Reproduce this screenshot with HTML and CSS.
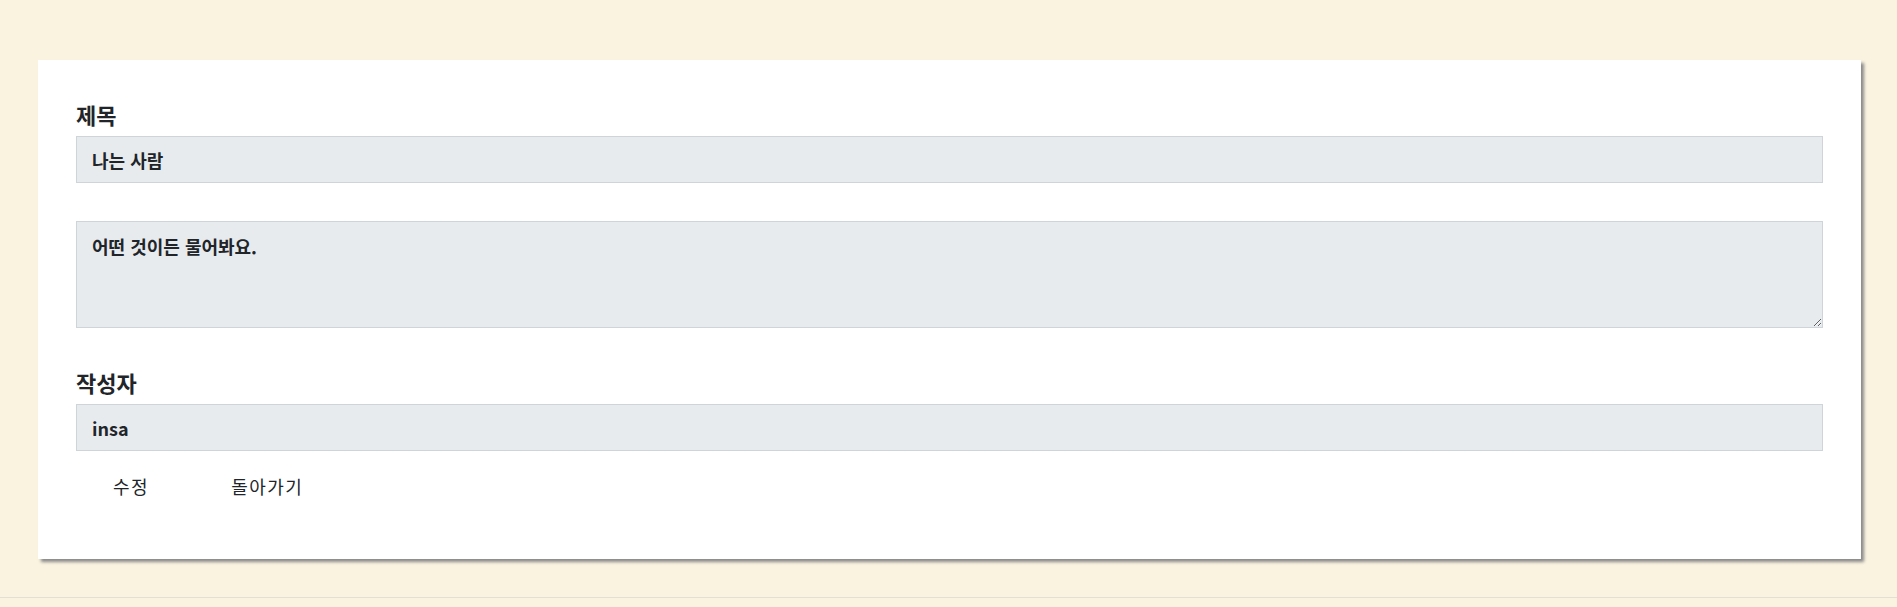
FILE: index.html
```html
<!DOCTYPE html>
<html lang="ko">
<head>
<meta charset="utf-8">
<title>글 수정</title>
<link rel="stylesheet" href="styles.css">
</head>
<body>
<main class="page">
  <form class="card">
    <div class="field">
      <label class="field-label" for="title">제목</label>
      <input class="control" id="title" type="text" value="나는 사람">
    </div>
    <div class="field field-area">
      <textarea class="control control-area" id="content">어떤 것이든 물어봐요.</textarea>
    </div>
    <div class="field field-last">
      <label class="field-label" for="writer">작성자</label>
      <input class="control" id="writer" type="text" value="insa">
    </div>
    <div class="actions">
      <button class="action" type="button">수정</button>
      <button class="action" type="button">돌아가기</button>
    </div>
  </form>
</main>
<footer class="footer"></footer>
</body>
</html>
```

FILE: styles.css
```css
* { box-sizing: border-box; }

html, body {
  margin: 0;
  padding: 0;
  background: #faf3e0;
  font-family: "Noto Sans CJK KR", "Noto Sans", sans-serif;
  color: #212529;
}

.page {
  padding: 60px 36px 38px 38px;
}

.card {
  background: #ffffff;
  box-shadow: 3px 3px 3px #8a8a8a;
  padding: 42px 38px 54px 38px;
  display: flex;
  flex-direction: column;
}

.field {
  display: flex;
  flex-direction: column;
  margin-bottom: 38px;
}

.field-area { margin-bottom: 42px; }
.field-last { margin-bottom: 16px; }

.field-label {
  font-size: 22px;
  font-weight: 700;
  line-height: 24px;
  margin-bottom: 10px;
}

.control {
  display: block;
  width: 100%;
  height: 47px;
  background: #e8ebee;
  border: 1px solid #ced4da;
  border-radius: 0;
  padding: 0 15px;
  font-family: "Noto Sans CJK KR", "Noto Sans", sans-serif;
  font-size: 18px;
  font-weight: 700;
  color: #212529;
  outline: none;
}

.control-area {
  height: 107px;
  padding: 12px 15px;
  resize: vertical;
  line-height: 24px;
}

.actions {
  display: flex;
  gap: 8px;
}

.action {
  background: transparent;
  border: none;
  font-family: "Noto Sans CJK KR", "Noto Sans", sans-serif;
  font-size: 18px;
  font-weight: 400;
  letter-spacing: 1.5px;
  line-height: 26px;
  color: #212529;
  padding: 6px 37px;
  cursor: pointer;
}

.footer {
  border-top: 1px solid #e2dfd6;
  height: 10px;
}
```
